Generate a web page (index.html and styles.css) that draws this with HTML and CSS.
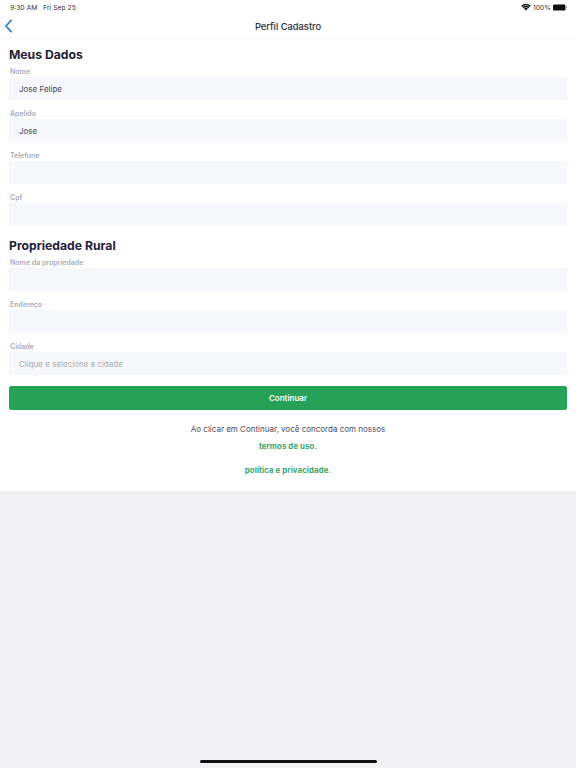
FILE: index.html
```html
<!DOCTYPE html>
<html lang="pt">
<head>
<meta charset="utf-8">
<title>Perfil Cadastro</title>
<link rel="stylesheet" href="styles.css">
</head>
<body>
<div class="sheet">
  <div class="status">
    <span class="time">9:30 AM&nbsp;&nbsp;&nbsp;Fri Sep 25</span>
    <span class="status-right">
      <svg class="wifi" viewBox="0 0 12 9" width="10" height="8"><path d="M6 8.6 0.2 3A8.4 8.4 0 0 1 11.8 3Z" fill="#111"/><path d="M1.9 4.3a6 6 0 0 1 8.2 0" stroke="#fff" stroke-width=".7" fill="none"/><path d="M3.6 6a3.6 3.6 0 0 1 4.8 0" stroke="#fff" stroke-width=".7" fill="none"/></svg>
      <span>100%</span>
      <svg class="battery" viewBox="0 0 14 7" width="14" height="7"><rect x="0" y="0.5" width="12.4" height="6" rx="1.2" fill="#111"/><rect x="12.8" y="2.4" width="1" height="2.2" rx=".4" fill="#888"/></svg>
    </span>
  </div>
  <header class="nav">
    <svg class="back" viewBox="0 0 10 16" width="9" height="14"><path d="M8 1.5 2 8l6 6.5" fill="none" stroke="#2a7fc9" stroke-width="2" stroke-linecap="round" stroke-linejoin="round"/></svg>
    <h1 class="nav-title">Perfil Cadastro</h1>
  </header>
  <main class="form">
    <h2 class="section first">Meus Dados</h2>
    <div class="field"><label class="label">Nome</label><div class="input">Jose Felipe</div></div>
    <div class="field"><label class="label">Apelido</label><div class="input">Jose</div></div>
    <div class="field"><label class="label">Telefone</label><div class="input"></div></div>
    <div class="field"><label class="label">Cpf</label><div class="input"></div></div>
    <h2 class="section">Propriedade Rural</h2>
    <div class="field"><label class="label">Nome da propriedade</label><div class="input"></div></div>
    <div class="field"><label class="label">Endereço</label><div class="input"></div></div>
    <div class="field"><label class="label">Cidade</label><div class="input placeholder">Clique e selecione a cidade</div></div>
    <button class="submit" type="button">Continuar</button>
    <p class="terms">Ao clicar em Continuar, você concorda com nossos</p>
    <a class="link link-one">termos de uso.</a>
    <a class="link link-two">política e privacidade.</a>
  </main>
</div>
<div class="home-bar"></div>
</body>
</html>
```
FILE: styles.css
```css
* { box-sizing: border-box; }
html, body { margin: 0; height: 100%; }
body {
  background: #f2f2f4;
  font-family: Inter, "Liberation Sans", sans-serif;
  height: 768px;
  overflow: hidden;
  display: flex;
  flex-direction: column;
}
.sheet { background: #fff; height: 491px; }
.status {
  height: 14px;
  padding: 0 9px 0 10px;
  display: flex;
  justify-content: space-between;
  align-items: center;
  font-size: 6.8px;
  color: #333;
}
.status-right { display: flex; align-items: center; gap: 2px; }
.nav {
  height: 25px;
  border-bottom: 1px solid #f6f6f8;
  display: flex;
  align-items: center;
  justify-content: center;
  position: relative;
}
.back { position: absolute; left: 4px; top: 5px; }
.nav-title { margin: 0; font-size: 9.3px; font-weight: 500; color: #2b2b3f; }
.form { padding: 0 9px; display: flex; flex-direction: column; }
.section { margin: 6px 0 0; font-size: 12.2px; font-weight: 700; color: #1f2038; line-height: 16px; height: 17px; }
.section.first { margin-top: 8px; }
.field { display: flex; flex-direction: column; margin-bottom: 6px; }
.label { font-size: 7px; font-weight: 600; color: #a8aabc; height: 13px; line-height: 11px; padding: 2px 0 0 1px; }
.input {
  height: 23px;
  background: #f7f8fb;
  border: 1px solid #f4f5f8;
  border-radius: 2px;
  padding-left: 9px;
  display: flex;
  align-items: center;
  font-size: 8px;
  color: #45465a;
}
.placeholder { color: #a8aab8; }
.submit {
  margin-top: 5px;
  height: 24px;
  border: 0;
  border-radius: 2px;
  background: #25a258;
  color: #fff;
  font: 600 8px Inter, "Liberation Sans", sans-serif;
}
.terms { margin: 10px 0 0; text-align: center; font-size: 8px; line-height: 18px; color: #4a4b5e; }
.link { text-align: center; font-size: 7.8px; font-weight: 700; color: #39a569; line-height: 12px; letter-spacing: .1px; }
.link-one { margin-top: 2px; }
.link-two { margin-top: 12px; }
.home-bar {
  position: absolute;
  left: 199.5px;
  top: 760px;
  width: 177px;
  height: 3px;
  border-radius: 2px;
  background: #111;
}
```
